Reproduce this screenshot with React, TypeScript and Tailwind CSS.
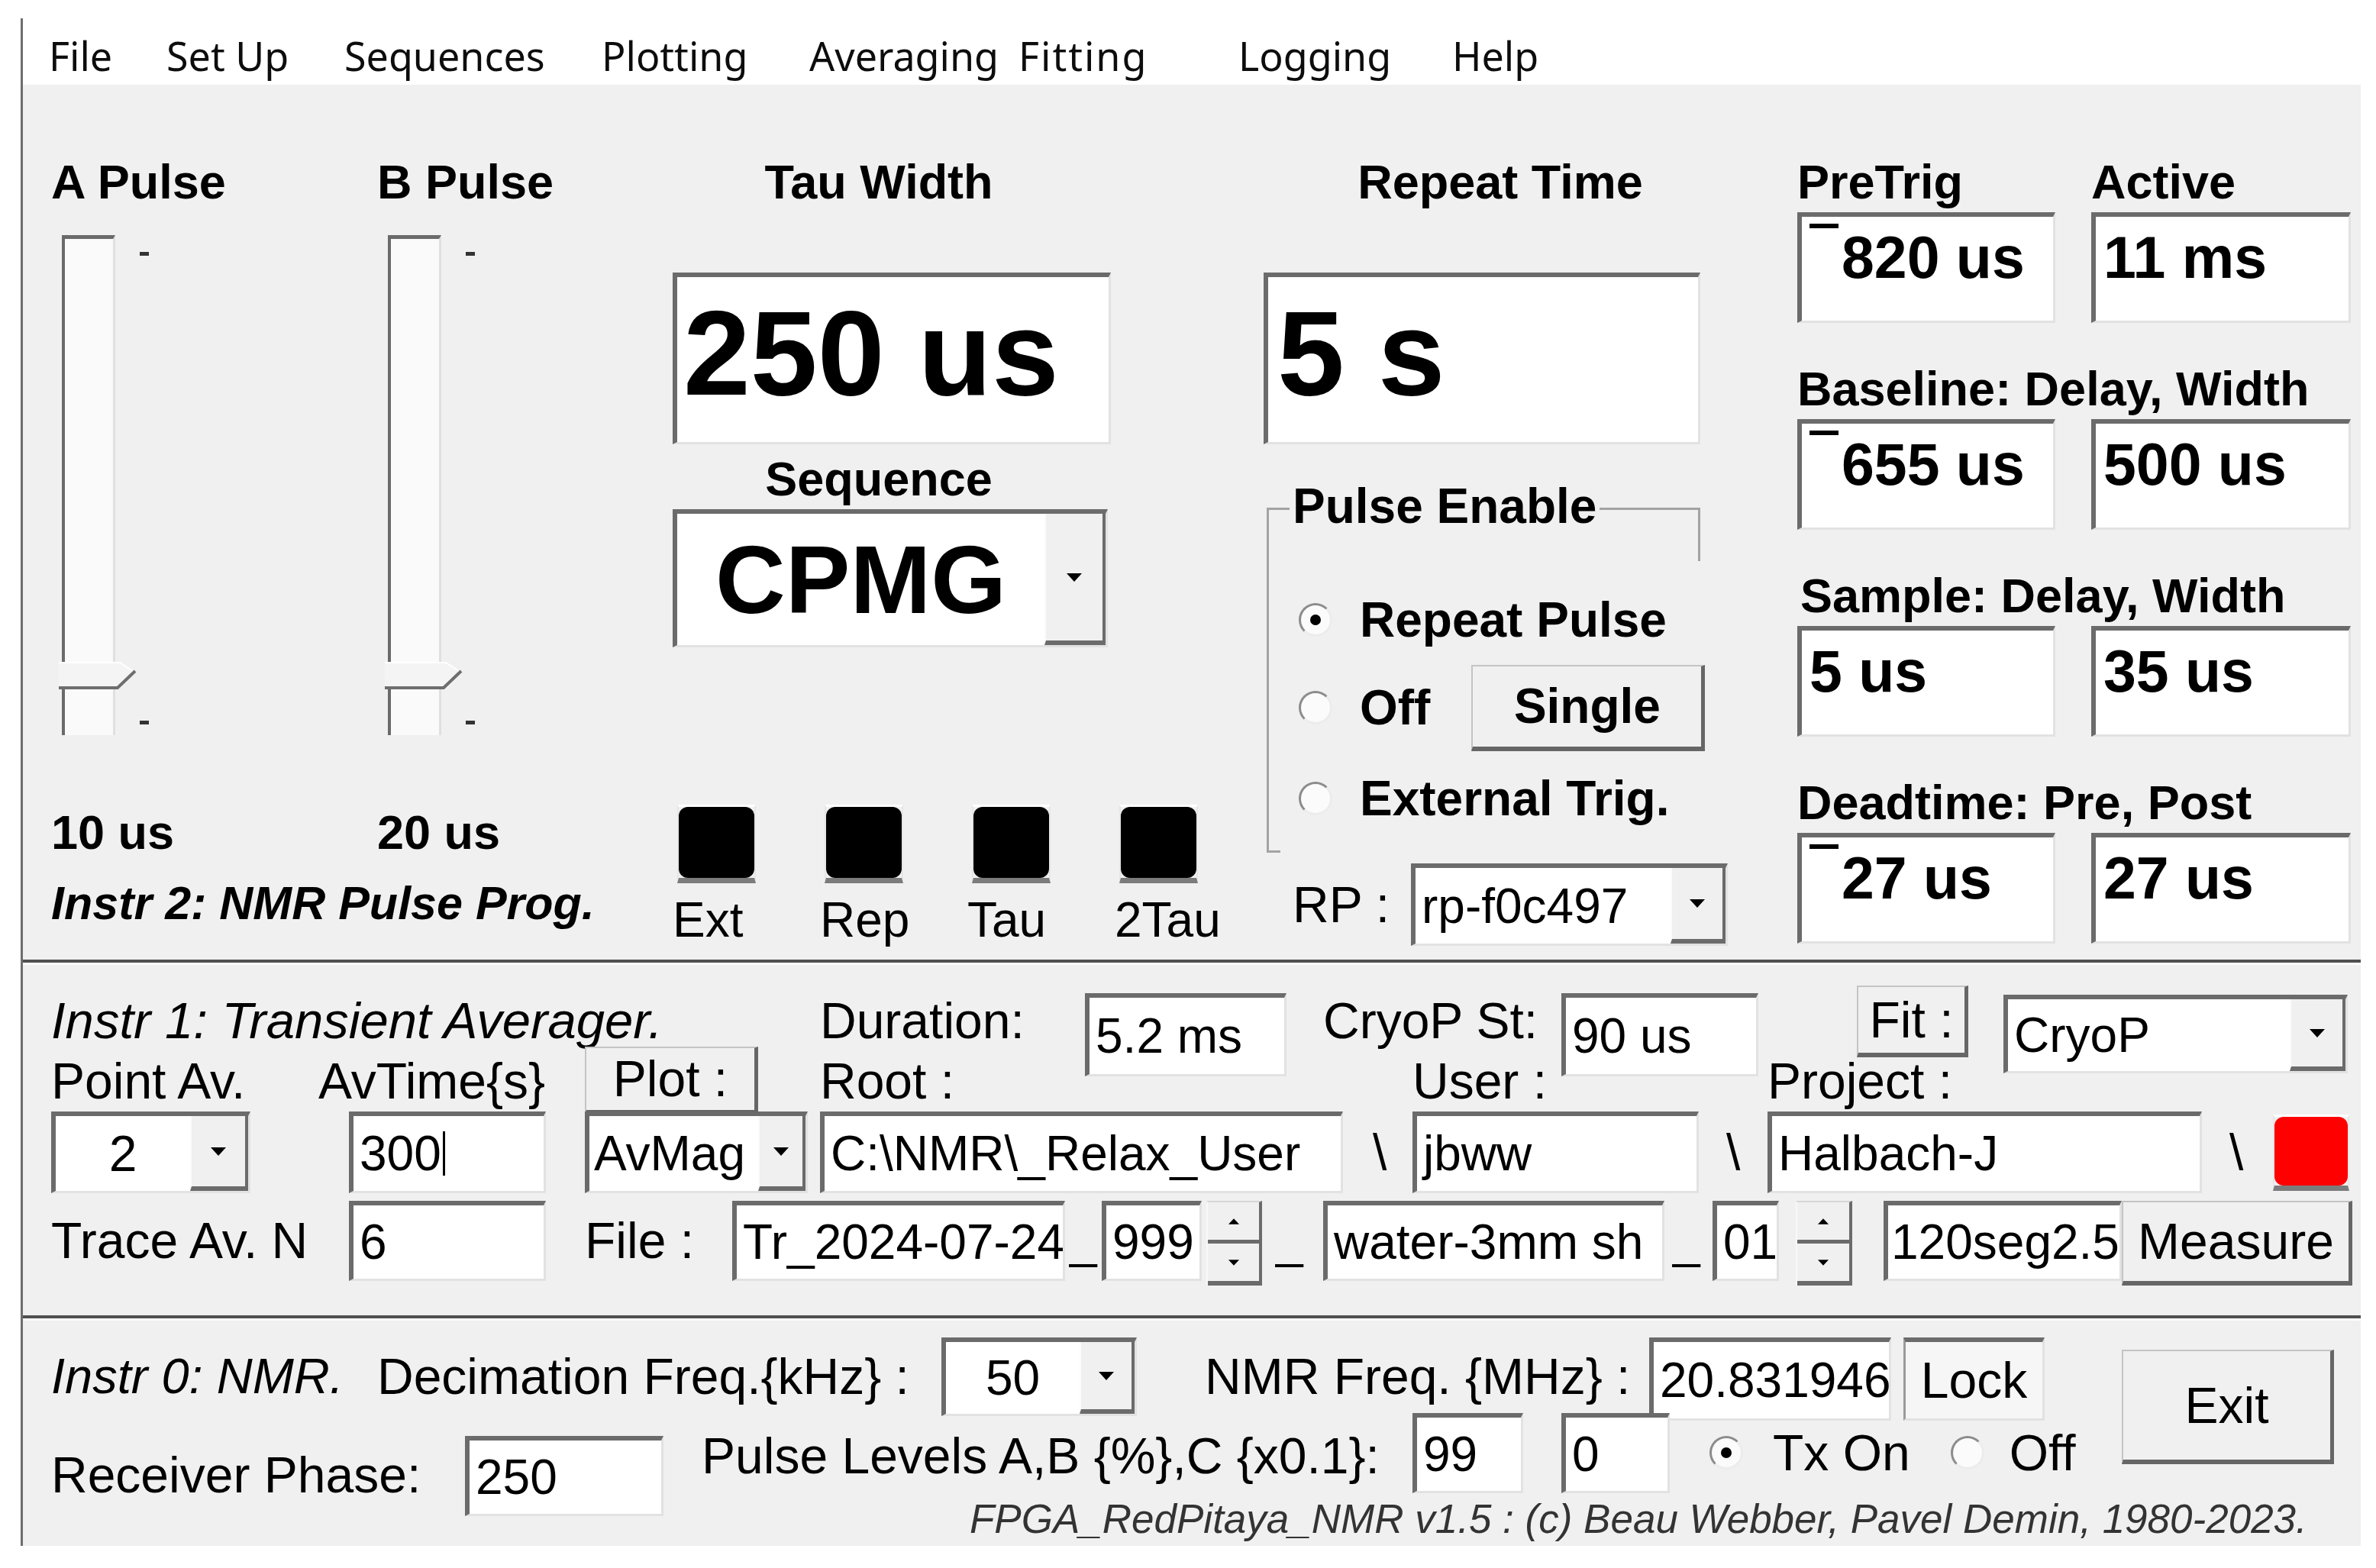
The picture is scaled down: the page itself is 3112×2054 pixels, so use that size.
import React from 'react'

type Box = { className?: string; children?: React.ReactNode }

// label styles
const LB = 'h-[72px] leading-[72px] text-[63px] font-bold whitespace-nowrap shrink-0'
const LR = 'h-[72px] leading-[72px] text-[66px] whitespace-nowrap shrink-0'

function Sunken({ className = '', children }: Box) {
  return (
    <div
      className={`shrink-0 flex overflow-hidden whitespace-nowrap bg-white border-t-[6px] border-l-[6px] border-r-[3px] border-b-[3px] border-t-[#6b6b6b] border-l-[#6b6b6b] border-r-[#e2e2e2] border-b-[#e2e2e2] ${className}`}
    >
      {children}
    </div>
  )
}

function Arrow({ up = false, w = 20, h = 11 }: { up?: boolean; w?: number; h?: number }) {
  return (
    <svg width={w} height={h} viewBox="0 0 20 11">
      <path d={up ? 'M10 0 L20 11 L0 11 Z' : 'M0 0 L20 0 L10 11 Z'} fill="#000" />
    </svg>
  )
}

function DropBtn({ className = '' }: { className?: string }) {
  return (
    <div
      className={`shrink-0 self-stretch flex items-center justify-center bg-[#f0f0f0] border-l-2 border-l-[#fbfbfb] border-r-[4px] border-r-[#6b6b6b] border-b-[6px] border-b-[#6b6b6b] ${className}`}
    >
      <Arrow />
    </div>
  )
}

function Btn({ className = '', children }: Box) {
  return (
    <div
      className={`shrink-0 flex items-center justify-center whitespace-nowrap bg-[#f0f0f0] border-t-2 border-l-2 border-t-[#c4c4c4] border-l-[#c4c4c4] border-r-[5px] border-b-[6px] border-r-[#666666] border-b-[#666666] ${className}`}
    >
      {children}
    </div>
  )
}

function Radio({ on = false }: { on?: boolean }) {
  return (
    <div className="shrink-0 w-[44px] h-[44px] rounded-full flex items-center justify-center bg-[#fbfbfb] border-[3px] border-t-[#8c8c8c] border-l-[#8c8c8c] border-r-[#ececec] border-b-[#ececec]">
      {on && <div className="w-[14px] h-[14px] rounded-full bg-black" />}
    </div>
  )
}

function Lamp({ className = '', red = false }: { className?: string; red?: boolean }) {
  return (
    <div
      className={`shrink-0 border-t-[3px] border-t-white border-b-[7px] border-b-[#7c7c7c] border-x-[2px] border-x-[#e6e6e6] ${className}`}
    >
      <div className={`w-full h-full rounded-[12px] ${red ? 'bg-[#ff0000]' : 'bg-black'}`} />
    </div>
  )
}

function Spin({ className = '' }: { className?: string }) {
  return (
    <div
      className={`shrink-0 flex flex-col bg-[#f0f0f0] border-t-2 border-t-[#d6d6d6] border-l-2 border-l-[#f8f8f8] border-r-[4px] border-r-[#6b6b6b] ${className}`}
    >
      <div className="flex-1 flex items-center justify-center border-b-[5px] border-b-[#6b6b6b]">
        <Arrow up w={14} h={10} />
      </div>
      <div className="flex-1 flex items-center justify-center border-b-[6px] border-b-[#6b6b6b]">
        <Arrow w={14} h={10} />
      </div>
    </div>
  )
}

function Slider() {
  return (
    <div className="mt-[34px] flex h-[655px]">
      <div className="relative ml-[14px] w-[70px] h-full bg-[#fafafa] border-l-[4px] border-t-[5px] border-l-[#6a6a6a] border-t-[#6a6a6a] border-r-[3px] border-r-[#e0e0e0]">
        {/* thumb */}
        <svg className="absolute left-[-8px] top-[554px]" width="104" height="40" viewBox="0 0 104 40">
          <polygon points="0,0 80,0 100,14 80,36 0,36" fill="#f4f4f4" />
          <polyline points="0,1 80,1 100,14" fill="none" stroke="#ffffff" strokeWidth="2" />
          <polyline points="0,34 77,34 100,12" fill="none" stroke="#6e6e6e" strokeWidth="4" />
        </svg>
      </div>
      <div className="ml-[32px] flex flex-col justify-between pt-[22px] pb-[14px]">
        <div className="w-[12px] h-[5px] bg-[#333333]" />
        <div className="w-[12px] h-[5px] bg-[#333333]" />
      </div>
    </div>
  )
}

function PulseCol({ label, value, className = '' }: { label: string; value: string; className?: string }) {
  return (
    <div className={`shrink-0 flex flex-col ${className}`}>
      <div className={`mt-[91px] ${LB}`}>{label}</div>
      <Slider />
      <div className={`mt-[91px] ${LB}`}>{value}</div>
    </div>
  )
}

function TimeBox({ className = '', neg = false, children }: Box & { neg?: boolean }) {
  return (
    <Sunken className={`h-[145px] items-start pt-[15px] pl-[10px] text-[77px] font-bold leading-none ${className}`}>
      {/* the app shows a bar where the minus sign should be */}
      {neg && <span className="shrink-0 -mt-[6px] mr-[4px] w-[38px] h-[6px] bg-black" />}
      {children}
    </Sunken>
  )
}

function TimePair({ label, a, b, negA = false }: { label: React.ReactNode; a: string; b: string; negA?: boolean }) {
  return (
    <div className="flex flex-col">
      {label}
      <div className="mt-[4px] flex gap-[47px]">
        <TimeBox className="w-[338px]" neg={negA}>{a}</TimeBox>
        <TimeBox className="w-[340px]">{b}</TimeBox>
      </div>
    </div>
  )
}

function Sep() {
  return <div className="h-[7px] shrink-0 border-t-[4px] border-t-[#505050] border-b-[3px] border-b-[#fcfcfc]" />
}

const BOXTXT = 'items-center pl-[8px] text-[64px] leading-none'

export default function App() {
  return (
    <div className="w-[3112px] h-[2054px] bg-white text-black font-['Liberation_Sans',Arial,sans-serif] overflow-hidden">
      <div className="mt-[24px] ml-[27px] w-[3065px] h-[2001px] border-l-[3px] border-l-[#6e6e6e] flex flex-col">
        {/* menu bar */}
        <div className="h-[87px] shrink-0 bg-white flex items-start pt-[23px] pl-[34px] font-['Noto_Sans',sans-serif] text-[52px] leading-none text-[#0d0d0d]">
          <span className="w-[154px] shrink-0">File</span>
          <span className="w-[233px] shrink-0">Set Up</span>
          <span className="w-[337px] shrink-0">Sequences</span>
          <span className="w-[272px] shrink-0">Plotting</span>
          <span className="w-[274px] shrink-0">Averaging</span>
          <span className="w-[288px] shrink-0 tracking-[2px]">Fitting</span>
          <span className="w-[280px] shrink-0">Logging</span>
          <span className="shrink-0">Help</span>
        </div>

        <div className="flex-1 bg-[#f0f0f0] flex flex-col">
          {/* Instr 2: pulse programmer */}
          <div className="h-[1146px] shrink-0 flex items-start pl-[37px]">
            <div className="w-[814px] shrink-0 flex flex-col">
              <div className="flex">
                <PulseCol label="A Pulse" value="10 us" className="w-[427px]" />
                <PulseCol label="B Pulse" value="20 us" className="w-[387px]" />
              </div>
              <div className="mt-[21px] h-[72px] leading-[72px] text-[61px] font-bold italic whitespace-nowrap">
                Instr 2: NMR Pulse Prog.
              </div>
            </div>

            <div className="w-[774px] shrink-0 flex flex-col">
              <div className={`mt-[91px] w-[540px] text-center ${LB}`}>Tau Width</div>
              <Sunken className="mt-[83px] w-[574px] h-[225px] items-center pl-[8px] pb-[18px] text-[158px] font-bold leading-none">
                250 us
              </Sunken>
              <div className={`mt-[9px] w-[540px] text-center ${LB}`}>Sequence</div>
              <Sunken className="mt-[4px] w-[570px] h-[181px] items-center">
                <div className="flex-1 text-center text-[127px] font-bold leading-none">CPMG</div>
                <DropBtn className="w-[80px]" />
              </Sunken>
              <div className="mt-[206px] flex">
                {['Ext', 'Rep', 'Tau', '2Tau'].map(t => (
                  <div key={t} className="w-[193px] shrink-0 flex flex-col">
                    <Lamp className="ml-[6px] w-[103px] h-[103px]" />
                    <div className="mt-[12px] h-[72px] leading-[72px] text-[64px] whitespace-nowrap">{t}</div>
                  </div>
                ))}
              </div>
            </div>

            <div className="w-[699px] shrink-0 flex flex-col">
              <div className={`mt-[91px] w-[620px] text-center ${LB}`}>Repeat Time</div>
              <Sunken className="mt-[83px] w-[572px] h-[225px] items-center pl-[12px] pb-[18px] text-[158px] font-bold leading-none">
                5 s
              </Sunken>
              {/* Pulse Enable group */}
              <div className="relative mt-[83px] ml-[4px] w-[568px] h-[452px] border-l-[3px] border-t-[3px] border-l-[#a3a3a3] border-t-[#a3a3a3]">
                <div className="absolute left-[27px] top-[-41px] px-[4px] bg-[#f0f0f0] h-[72px] leading-[72px] text-[64px] font-bold whitespace-nowrap">
                  Pulse Enable
                </div>
                <div className="absolute right-0 top-[-3px] w-[3px] h-[70px] bg-[#a3a3a3]" />
                <div className="absolute left-[-3px] bottom-0 w-[18px] h-[3px] bg-[#a3a3a3]" />
                <div className="flex flex-col pl-[39px]">
                  <div className="mt-[108px] h-[72px] flex items-center">
                    <Radio on />
                    <span className="ml-[36px] text-[64px] font-bold whitespace-nowrap">Repeat Pulse</span>
                  </div>
                  <div className="mt-[43px] h-[72px] flex items-center">
                    <Radio />
                    <span className="ml-[36px] text-[64px] font-bold whitespace-nowrap">Off</span>
                    <Btn className="ml-[54px] w-[306px] h-[113px] text-[64px] font-bold">Single</Btn>
                  </div>
                  <div className="mt-[47px] h-[72px] flex items-center">
                    <Radio />
                    <span className="ml-[36px] text-[64px] font-bold whitespace-nowrap">External Trig.</span>
                  </div>
                </div>
              </div>
              <div className="mt-[14px] h-[108px] flex items-center">
                <div className={`ml-[38px] w-[155px] ${LR}`}>RP :</div>
                <Sunken className="w-[415px] h-[108px] items-center">
                  <div className="flex-1 pl-[8px] text-[64px] leading-none">rp-f0c497</div>
                  <DropBtn className="w-[72px]" />
                </Sunken>
              </div>
            </div>

            <div className="w-[725px] shrink-0 flex flex-col gap-[50px] pt-[91px]">
              <TimePair
                label={
                  <div className="flex">
                    <div className={`w-[385px] ${LB}`}>PreTrig</div>
                    <div className={LB}>Active</div>
                  </div>
                }
                a="820 us"
                b="11 ms"
                negA
              />
              <TimePair label={<div className={LB}>Baseline: Delay, Width</div>} a="655 us" b="500 us" negA />
              <TimePair label={<div className={`ml-[4px] ${LB}`}>Sample: Delay, Width</div>} a="5 us" b="35 us" />
              <TimePair label={<div className={LB}>Deadtime: Pre, Post</div>} a="27 us" b="27 us" negA />
            </div>
          </div>

          <Sep />

          {/* Instr 1: transient averager */}
          <div className="h-[459px] shrink-0 flex flex-col pl-[37px]">
            <div className="h-[116px] shrink-0 flex items-start">
              <div className="mt-[37px] w-[1007px] h-[72px] leading-[72px] text-[67px] italic whitespace-nowrap shrink-0">
                Instr 1: Transient Averager.
              </div>
              <div className={`mt-[37px] w-[347px] ${LR}`}>Duration:</div>
              <Sunken className={`mt-[37px] w-[264px] h-[109px] ${BOXTXT}`}>5.2 ms</Sunken>
              <div className={`ml-[48px] mt-[37px] w-[312px] ${LR}`}>CryoP St:</div>
              <Sunken className={`mt-[37px] w-[258px] h-[109px] ${BOXTXT}`}>90 us</Sunken>
              <Btn className="ml-[129px] mt-[27px] w-[146px] h-[94px] text-[66px]">Fit :</Btn>
              <Sunken className="ml-[46px] mt-[39px] w-[451px] h-[103px] items-center">
                <div className="flex-1 pl-[8px] text-[64px] leading-none">CryoP</div>
                <DropBtn className="w-[73px]" />
              </Sunken>
            </div>

            <div className="h-[76px] shrink-0 flex items-start">
              <div className={`w-[350px] ${LR}`}>Point Av.</div>
              <div className={`w-[349px] ${LR}`}>AvTime{'{s}'}</div>
              <Btn className="-mt-[9px] w-[227px] h-[89px] text-[66px]">Plot :</Btn>
              <div className={`ml-[81px] w-[776px] ${LR}`}>Root :</div>
              <div className={`w-[465px] ${LR}`}>User :</div>
              <div className={LR}>Project :</div>
            </div>

            <div className="h-[107px] shrink-0 flex items-start">
              <Sunken className="w-[261px] h-[107px] items-center">
                <div className="flex-1 text-center text-[66px] leading-none">2</div>
                <DropBtn className="w-[76px]" />
              </Sunken>
              <Sunken className={`ml-[129px] w-[258px] h-[107px] ${BOXTXT}`}>
                300
                <span className="ml-[2px] w-[3px] h-[58px] bg-black" />
              </Sunken>
              <Sunken className="ml-[51px] w-[292px] h-[107px] items-center">
                <div className="flex-1 pl-[6px] text-[64px] leading-none">AvMag</div>
                <DropBtn className="w-[62px]" />
              </Sunken>
              <Sunken className={`ml-[16px] w-[685px] h-[107px] ${BOXTXT}`}>C:\NMR\_Relax_User</Sunken>
              <div className="ml-[39px] w-[52px] h-[107px] leading-[107px] text-[66px] shrink-0">\</div>
              <Sunken className={`w-[375px] h-[107px] ${BOXTXT}`}>jbww</Sunken>
              <div className="ml-[36px] w-[54px] h-[107px] leading-[107px] text-[66px] shrink-0">\</div>
              <Sunken className={`w-[569px] h-[107px] ${BOXTXT}`}>Halbach-J</Sunken>
              <div className="ml-[36px] w-[57px] h-[107px] leading-[107px] text-[66px] shrink-0">\</div>
              <Lamp red className="mt-[4px] w-[100px] h-[100px]" />
            </div>

            <div className="mt-[10px] h-[111px] shrink-0 flex items-start">
              <div className="w-[390px] h-[105px] leading-[105px] text-[66px] whitespace-nowrap shrink-0">Trace Av. N</div>
              <Sunken className={`w-[258px] h-[105px] ${BOXTXT}`}>6</Sunken>
              <div className="ml-[51px] w-[193px] h-[105px] leading-[105px] text-[66px] whitespace-nowrap shrink-0">File :</div>
              <Sunken className={`w-[436px] h-[105px] ${BOXTXT}`}>Tr_2024-07-24</Sunken>
              <div className="w-[48px] h-[105px] leading-[105px] text-[64px] pl-[6px] shrink-0">_</div>
              <Sunken className={`w-[131px] h-[105px] ${BOXTXT}`}>999</Sunken>
              <Spin className="ml-[6px] w-[73px] h-[111px]" />
              <div className="w-[80px] h-[105px] leading-[105px] text-[64px] pl-[18px] shrink-0">_</div>
              <Sunken className={`w-[447px] h-[105px] ${BOXTXT}`}>water-3mm sh</Sunken>
              <div className="w-[63px] h-[105px] leading-[105px] text-[64px] pl-[11px] shrink-0">_</div>
              <Sunken className={`w-[87px] h-[105px] ${BOXTXT}`}>01</Sunken>
              <Spin className="ml-[22px] w-[74px] h-[111px]" />
              <Sunken className="ml-[41px] w-[312px] h-[105px] items-center pl-[4px] text-[64px] leading-none">120seg2.5</Sunken>
              <Btn className="w-[302px] h-[111px] text-[66px]">Measure</Btn>
            </div>
          </div>

          <Sep />

          {/* Instr 0: NMR */}
          <div className="h-[295px] shrink-0 flex flex-col pl-[37px]">
            <div className="h-[121px] shrink-0 flex items-start">
              <div className="mt-[37px] w-[427px] h-[72px] leading-[72px] text-[65px] italic whitespace-nowrap shrink-0">
                Instr 0: NMR.
              </div>
              <div className={`mt-[37px] w-[739px] ${LR}`}>Decimation Freq.{'{kHz}'} :</div>
              <Sunken className="mt-[22px] w-[256px] h-[103px] items-center">
                <div className="flex-1 text-center text-[64px] leading-none">50</div>
                <DropBtn className="w-[72px]" />
              </Sunken>
              <div className={`ml-[89px] mt-[37px] w-[582px] ${LR}`}>NMR Freq. {'{MHz}'} :</div>
              <Sunken className={`mt-[22px] w-[317px] h-[109px] ${BOXTXT}`}>20.831946</Sunken>
              <div className="ml-[16px] mt-[22px] w-[185px] h-[109px] shrink-0 flex items-center justify-center bg-[#f6f6f6] border-t-[6px] border-l-[3px] border-r-[3px] border-b-[3px] border-t-[#6b6b6b] border-l-[#9a9a9a] border-r-[#e2e2e2] border-b-[#e2e2e2] text-[66px] leading-none">
                Lock
              </div>
              <Btn className="ml-[101px] mt-[38px] w-[278px] h-[150px] text-[66px]">Exit</Btn>
            </div>

            <div className="h-[109px] shrink-0 flex items-start">
              <div className={`mt-[45px] w-[542px] ${LR}`}>Receiver Phase:</div>
              <Sunken className={`mt-[30px] w-[260px] h-[105px] ${BOXTXT}`}>250</Sunken>
              <div className={`ml-[50px] mt-[20px] w-[931px] ${LR}`}>Pulse Levels A,B {'{%}'},C {'{x0.1}'}:</div>
              <Sunken className={`w-[145px] h-[105px] ${BOXTXT}`}>99</Sunken>
              <Sunken className={`ml-[50px] w-[142px] h-[105px] ${BOXTXT}`}>0</Sunken>
              <div className="ml-[52px] mt-[16px] h-[72px] flex items-center shrink-0">
                <Radio on />
                <span className="ml-[39px] text-[66px] whitespace-nowrap">Tx On</span>
                <div className="ml-[53px]">
                  <Radio />
                </div>
                <span className="ml-[33px] text-[66px] whitespace-nowrap">Off</span>
              </div>
            </div>

            <div className="h-[60px] shrink-0 pl-[1203px] leading-[60px] text-[53px] italic text-[#333333] whitespace-nowrap">
              FPGA_RedPitaya_NMR v1.5 : (c) Beau Webber, Pavel Demin, 1980-2023.
            </div>
          </div>
        </div>
      </div>
    </div>
  )
}
